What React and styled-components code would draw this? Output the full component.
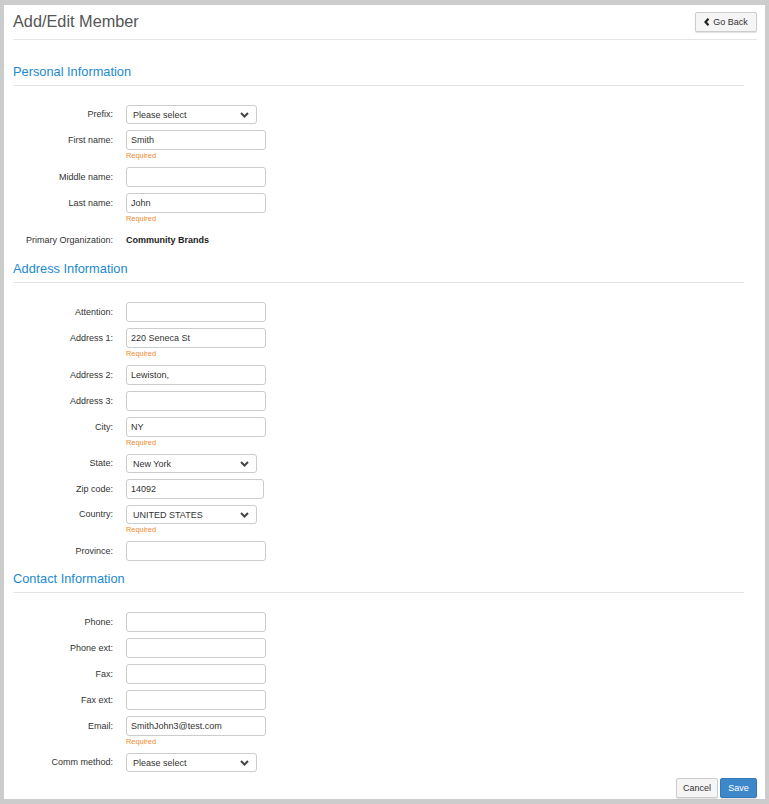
import styled, { createGlobalStyle } from 'styled-components';

const GlobalStyle = createGlobalStyle`
  html, body {
    margin: 0;
    padding: 0;
    background: #cccccc;
  }
  body {
    font-family: "Liberation Sans", Arial, sans-serif;
    color: #333333;
  }
`;

const Panel = styled.div`
  margin: 5px 4px;
  height: 794px;
  background: #ffffff;
  box-sizing: border-box;
  padding: 0 8px 0 9px;
  display: flex;
  flex-direction: column;
`;

const Header = styled.div`
  display: flex;
  justify-content: space-between;
  align-items: flex-start;
  height: 34px;
  border-bottom: 1px solid #e5e5e5;
`;

const Title = styled.h1`
  margin: 6px 0 0;
  font-size: 16.3px;
  font-weight: normal;
  line-height: 20px;
  color: #555555;
`;

const Button = styled.button`
  height: 20px;
  width: ${(p) => p.$w}px;
  box-sizing: border-box;
  padding: 0;
  font-family: "Liberation Sans", Arial, sans-serif;
  font-size: 9px;
  border-radius: 2px;
  border: 1px solid ${(p) => (p.$primary ? '#3478b6' : '#cccccc')};
  background: ${(p) => (p.$primary ? '#3d88cb' : '#f5f5f5')};
  color: ${(p) => (p.$primary ? '#ffffff' : '#333333')};
  box-shadow: 0 1px 1px rgba(0, 0, 0, 0.12);
  display: inline-flex;
  align-items: center;
  justify-content: center;
  gap: 3px;
  cursor: pointer;
`;

const BackButton = styled(Button)`
  margin-top: 7px;
`;

const Section = styled.div`
  margin-right: 13px;
`;

const SectionTitle = styled.h2`
  margin: ${(p) => p.$top}px 0 19px;
  font-size: 12.8px;
  font-weight: normal;
  line-height: 16px;
  color: #2189d0;
  padding-bottom: 5px;
  border-bottom: 1px solid #e3e3e3;
`;

const Row = styled.div`
  display: flex;
  align-items: flex-start;
  margin-bottom: 6px;
`;

const Label = styled.label`
  width: 100px;
  flex: none;
  margin-right: 13px;
  text-align: right;
  font-size: 9px;
  line-height: ${(p) => (p.$h ? p.$h : 20)}px;
  color: #333333;
`;

const Field = styled.div`
  display: flex;
  flex-direction: column;
`;

const Input = styled.input`
  width: ${(p) => (p.$w ? p.$w : 140)}px;
  height: 20px;
  box-sizing: border-box;
  border: 1px solid #cccccc;
  border-radius: 3px;
  padding: 0 4px;
  font-family: "Liberation Sans", Arial, sans-serif;
  font-size: 9px;
  color: #333333;
  outline: none;
`;

const SelectBox = styled.div`
  width: 131px;
  height: 19px;
  box-sizing: border-box;
  border: 1px solid #cccccc;
  border-radius: 3px;
  padding: 0 7px 0 6px;
  display: flex;
  align-items: center;
  justify-content: space-between;
  font-size: 9px;
  color: #333333;
`;

const Required = styled.span`
  font-size: 7.4px;
  line-height: 11px;
  color: #f0892f;
`;

const Static = styled.span`
  font-size: 9px;
  font-weight: bold;
  line-height: 20px;
  color: #222222;
`;

const Footer = styled.div`
  display: flex;
  justify-content: flex-end;
  gap: 2px;
`;

function ChevronDown() {
  return (
    <svg width="9" height="6" viewBox="0 0 9 6">
      <polyline points="1,1 4.5,4.5 8,1" fill="none" stroke="#444" strokeWidth="2" />
    </svg>
  );
}

function ChevronLeft() {
  return (
    <svg width="6" height="8" viewBox="0 0 6 8">
      <polyline points="4.5,0.8 1.5,4 4.5,7.2" fill="none" stroke="#222" strokeWidth="2.2" />
    </svg>
  );
}

function TextRow({ label, value = '', required, width }) {
  return (
    <Row>
      <Label>{label}</Label>
      <Field>
        <Input defaultValue={value} $w={width} />
        {required && <Required>Required</Required>}
      </Field>
    </Row>
  );
}

function SelectRow({ label, value, required }) {
  return (
    <Row>
      <Label $h={19}>{label}</Label>
      <Field>
        <SelectBox>
          <span>{value}</span>
          <ChevronDown />
        </SelectBox>
        {required && <Required>Required</Required>}
      </Field>
    </Row>
  );
}

export default function App() {
  return (
    <>
      <GlobalStyle />
      <Panel>
        <Header>
          <Title>Add/Edit Member</Title>
          <BackButton $w={62}>
            <ChevronLeft />
            Go Back
          </BackButton>
        </Header>

        <Section>
          <SectionTitle $top={24}>Personal Information</SectionTitle>
          <SelectRow label="Prefix:" value="Please select" />
          <TextRow label="First name:" value="Smith" required />
          <TextRow label="Middle name:" />
          <TextRow label="Last name:" value="John" required />
          <Row>
            <Label>Primary Organization:</Label>
            <Static>Community Brands</Static>
          </Row>
        </Section>

        <Section>
          <SectionTitle $top={5}>Address Information</SectionTitle>
          <TextRow label="Attention:" />
          <TextRow label="Address 1:" value="220 Seneca St" required />
          <TextRow label="Address 2:" value="Lewiston," />
          <TextRow label="Address 3:" />
          <TextRow label="City:" value="NY" required />
          <SelectRow label="State:" value="New York" />
          <TextRow label="Zip code:" value="14092" width={138} />
          <SelectRow label="Country:" value="UNITED STATES" required />
          <TextRow label="Province:" />
        </Section>

        <Section>
          <SectionTitle $top={4}>Contact Information</SectionTitle>
          <TextRow label="Phone:" />
          <TextRow label="Phone ext:" />
          <TextRow label="Fax:" />
          <TextRow label="Fax ext:" />
          <TextRow label="Email:" value="SmithJohn3@test.com" required />
          <SelectRow label="Comm method:" value="Please select" />
        </Section>

        <Footer>
          <Button $w={42}>Cancel</Button>
          <Button $primary $w={37}>Save</Button>
        </Footer>
      </Panel>
    </>
  );
}
